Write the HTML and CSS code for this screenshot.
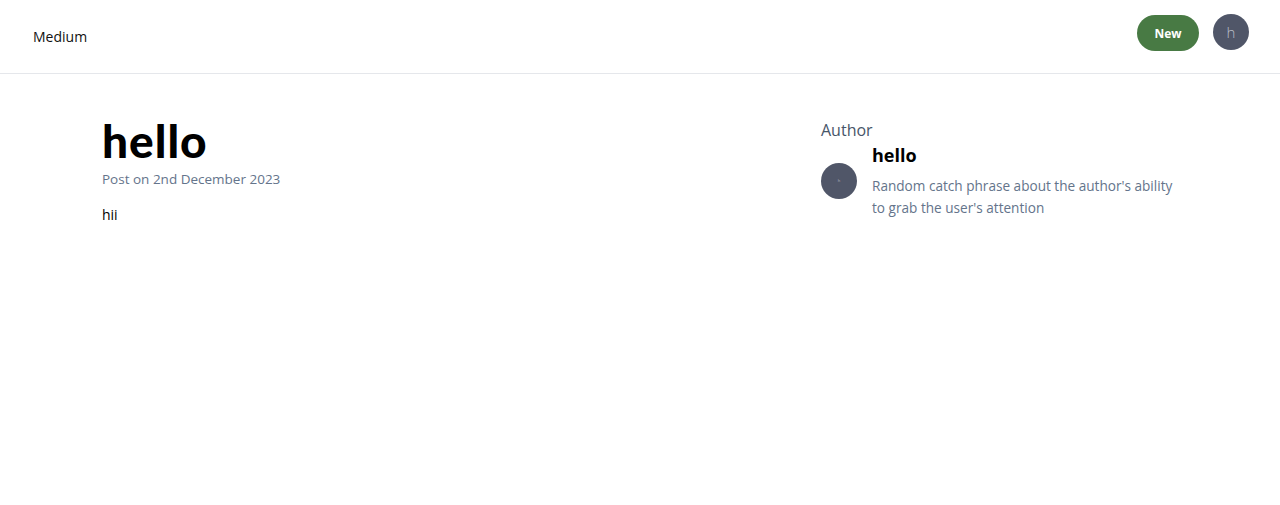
FILE: index.html
```html
<!DOCTYPE html>
<html>
<head>
<meta charset="utf-8">
<link rel="stylesheet" href="styles.css">
</head>
<body>
<header class="nav">
  <div class="brand">Medium</div>
  <div class="nav-right">
    <button class="btn-new">New</button>
    <div class="avatar avatar-nav">h</div>
  </div>
</header>
<main class="wrap">
  <div class="grid">
    <section class="post">
      <h1 class="title">hello</h1>
      <div class="date">Post on 2nd December 2023</div>
      <div class="content">hii</div>
    </section>
    <aside class="author">
      <div class="author-label">Author</div>
      <div class="author-row">
        <div class="author-av-col">
          <div class="avatar avatar-small">h</div>
        </div>
        <div>
          <div class="author-name">hello</div>
          <div class="author-desc">Random catch phrase about the author's ability to grab the user's attention</div>
        </div>
      </div>
    </aside>
  </div>
</main>
</body>
</html>
```
FILE: styles.css
```css
* { box-sizing: border-box; }
html, body { margin: 0; padding: 0; background: #fff; }
body { font-family: "Open Sans", "Noto Sans", sans-serif; color: #000; }

.nav {
  height: 74px;
  border-bottom: 1px solid #e5e7eb;
  display: flex;
  justify-content: space-between;
  align-items: center;
  padding: 0 31px 7px 33px;
}
.brand { font-size: 14px; color: #111; margin-top: 7px; }
.nav-right { display: flex; align-items: center; gap: 14px; }
.btn-new {
  width: 62px; height: 36px;
  border: none; border-radius: 18px;
  background: #487a44; color: #fff;
  font-family: "Open Sans", sans-serif; font-weight: 700; font-size: 12px;
  padding: 0;
}
.avatar {
  border-radius: 50%;
  background: #505668;
  color: #b8bcc6;
  display: flex; align-items: center; justify-content: center;
}
.avatar-nav { width: 36px; height: 36px; font-size: 15px; font-weight: 300; margin-top: -2px; }
.avatar-small { width: 36px; height: 36px; font-size: 4px; }

.wrap { padding: 0 98px 0 102px; }
.grid { display: grid; grid-template-columns: 2fr 1fr; padding-top: 44px; }
.title {
  margin: 0;
  font-family: "Lato", sans-serif;
  font-weight: 900;
  font-size: 46px;
  line-height: 1;
  letter-spacing: 1px;
}
.date { color: #64748b; font-size: 13.5px; padding-top: 6px; }
.content { font-size: 14px; padding-top: 17px; }

.author { padding-top: 0; }
.author-label { color: #475569; font-size: 16px; line-height: 24px; }
.author-row { display: flex; }
.author-av-col { display: flex; flex-direction: column; justify-content: center; padding-right: 15px; }
.author-name { font-weight: 700; font-size: 18px; line-height: 26px; }
.author-desc { color: #64748b; font-size: 13.6px; line-height: 22px; padding-top: 7px; width: 310px; }
```
